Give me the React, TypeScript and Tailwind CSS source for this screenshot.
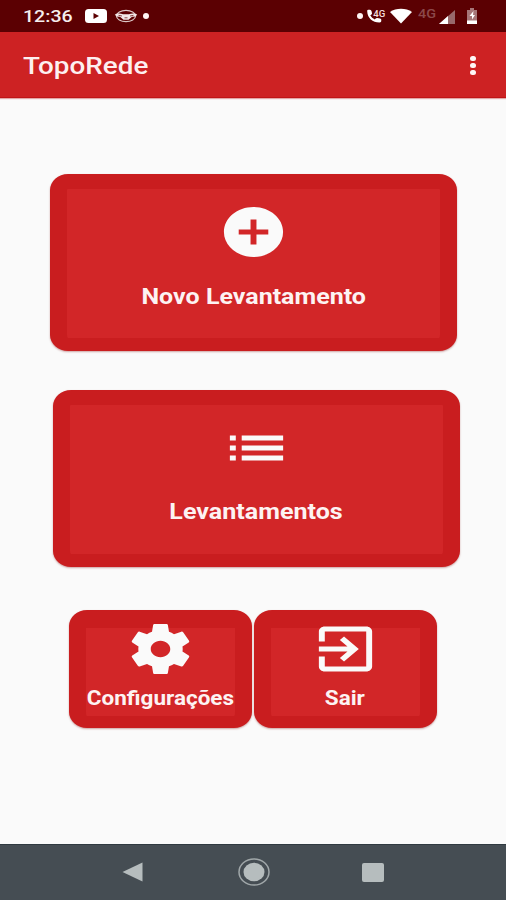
import type { ReactNode } from "react";

function Glyph({ d, className = "" }: { d: string; className?: string }) {
  return (
    <svg viewBox="0 0 24 24" preserveAspectRatio="none" className={`h-[60px] w-[71px] shrink-0 fill-[#fafafa] ${className}`}>
      <path d={d} />
    </svg>
  );
}

const ADD = "M12 2C6.48 2 2 6.48 2 12s4.48 10 10 10 10-4.48 10-10S17.52 2 12 2zm5 11h-4v4h-2v-4H7v-2h4V7h2v4h4v2z";
const LIST = "M3 13h2v-2H3v2zm0 4h2v-2H3v2zm0-8h2V7H3v2zm4 4h14v-2H7v2zm0 4h14v-2H7v2zM7 7v2h14V7H7z";
const GEAR = "M19.43 12.98c.04-.32.07-.64.07-.98s-.03-.66-.07-.98l2.11-1.65c.19-.15.24-.42.12-.64l-2-3.46c-.12-.22-.39-.3-.61-.22l-2.49 1c-.52-.4-1.08-.73-1.69-.98l-.38-2.65C14.46 2.18 14.25 2 14 2h-4c-.25 0-.46.18-.49.42l-.38 2.65c-.61.25-1.17.59-1.69.98l-2.49-1c-.23-.09-.49 0-.61.22l-2 3.46c-.13.22-.07.49.12.64l2.11 1.65c-.04.32-.07.65-.07.98s.03.66.07.98l-2.11 1.65c-.19.15-.24.42-.12.64l2 3.46c.12.22.39.3.61.22l2.49-1c.52.4 1.08.73 1.69.98l.38 2.65c.03.24.24.42.49.42h4c.25 0 .46-.18.49-.42l.38-2.65c.61-.25 1.17-.59 1.69-.98l2.49 1c.23.09.49 0 .61-.22l2-3.46c.12-.22.07-.49-.12-.64l-2.11-1.65zM12 15.3c-1.82 0-3.3-1.48-3.3-3.3s1.48-3.3 3.3-3.3 3.3 1.48 3.3 3.3-1.48 3.3-3.3 3.3z";
const EXIT = "M10.09 15.59L11.5 17l5-5-5-5-1.41 1.41L12.67 11H3v2h9.67l-2.58 2.59zM19 3H5c-1.11 0-2 .9-2 2v4h2V5h14v14H5v-4H3v4c0 1.1.89 2 2 2h14c1.1 0 2-.9 2-2V5c0-1.1-.9-2-2-2z";

function Card({ className, children }: { className: string; children: ReactNode }) {
  return (
    <button className={`flex shrink-0 rounded-[18px/16px] border-[#c91d1f] bg-[#d22628] shadow-[0_1px_2px_rgba(120,0,0,0.35)] ${className}`}>
      <span className="flex h-full w-full flex-col items-center">{children}</span>
    </button>
  );
}

function StatusBar() {
  return (
    <div className="flex h-8 shrink-0 items-center bg-[#5b0002] pl-[23px]">
      <span className="w-[62px] shrink-0 whitespace-nowrap text-[17px] font-medium leading-8 text-[#f6eeee]">
        <span className="inline-block origin-left scale-x-[1.15]">12:36</span>
      </span>
      <svg viewBox="0 0 22 14" className="h-[14px] w-[22px] shrink-0">
        <rect width="22" height="14" rx="3.5" fill="#fff" />
        <path d="M8.5 4v6l5.5-3z" fill="#5b0002" />
      </svg>
      <svg viewBox="0 0 24 16" className="ml-[7px] h-4 w-6 shrink-0">
        <ellipse cx="12" cy="8" rx="9.5" ry="5.7" fill="none" stroke="#dcc6c6" strokeWidth="1.200" />
        <path d="M.8 6.500C3 5.400 6 5 9 6.200h6c3-1.200 6-.8 8.200.3-1 2-3.500 2.300-5.200 2.300l-3.500 3h-5L6 8.800C4.300 8.800 1.800 8.500.8 6.500z" fill="#f3e8e8" />
        <path d="M4.500 7.300l3.500.7M19.500 7.300L16 8M10.500 9.800h3" stroke="#5b0002" strokeWidth=".7" />
      </svg>
      <span className="ml-[5px] size-[6px] rounded-full bg-[#fff4f4]" />
      <span className="ml-[208px] size-[6px] rounded-full bg-[#fff4f4]" />
      <svg viewBox="0 0 20 18" className="ml-[3px] h-[18px] w-5 shrink-0">
        <path d="M1.200 4.200C1 3 1.800 2.700 3 2.700c1.300 0 2.200.2 2.500 1.300l.5 2.200c.1.700-.2 1.100-.8 1.500l-.9.600c1 2 2.300 3.200 4.500 4.100l.9-.9c.5-.5 1-.7 1.700-.5l2.600.5c1 .2 1.300.8 1.300 1.800 0 1.500-.4 2.200-1.800 2.200C6.500 15.500 1.500 11 1.200 4.200z" fill="#fff" />
        <text x="7.200" y="9.500" fontSize="9" fontWeight="500" fill="#f5dcdc" textLength="12" lengthAdjust="spacingAndGlyphs">4G</text>
      </svg>
      <svg viewBox="0 0 22 16" className="ml-[4px] h-4 w-[22px] shrink-0">
        <path d="M0 4C6-.3 16-.3 22 4L11 15.500z" fill="#fff" />
      </svg>
      <span className="ml-[6px] h-8 w-[21px] shrink-0 text-[12px] font-medium leading-[28px] text-[#8b484a]">
        <span className="inline-block origin-left scale-x-[1.2]">4G</span>
      </span>
      <svg viewBox="0 0 16 15" className="h-[15px] w-4 shrink-0">
        <path d="M0 15L16 1v14z" fill="#98696b" />
        <path d="M0 15l9-8v8z" fill="#fff" />
      </svg>
      <svg viewBox="0 0 12 16" className="ml-[11px] h-4 w-3 shrink-0">
        <path d="M1 2h3V0h4v2h3v14H1z" fill="#a67678" />
        <path d="M1 12.500h10V16H1z" fill="#fff" />
        <path d="M7.500 3L3.500 8H6v3.500L9 7H7z" fill="#fff" />
      </svg>
    </div>
  );
}

function Label({ children, className }: { children: ReactNode; className: string }) {
  return <span className={`inline-block whitespace-nowrap font-bold text-[#fdf3f3] ${className}`}>{children}</span>;
}

export default function App() {
  return (
    <div className="flex h-[900px] w-[506px] flex-col overflow-hidden bg-[#fafafa] font-[Roboto,sans-serif]">
      <StatusBar />
      <header className="flex h-[66px] shrink-0 items-center justify-between border-b border-[#c01416] bg-[#cd2223] pl-[23px] pr-[30px] shadow-[0_1px_1px_rgba(190,40,40,0.4)]">
        <h1 className="mt-[3px] origin-left scale-x-[1.16] text-[24px] font-medium leading-none text-[#fdf0f0]">TopoRede</h1>
        <div className="mt-px flex flex-col gap-[2px]">
          <i className="h-[5px] w-[6px] rounded-full bg-[#fff6f6]" />
          <i className="h-[5px] w-[6px] rounded-full bg-[#fff6f6]" />
          <i className="h-[5px] w-[6px] rounded-full bg-[#fff6f6]" />
        </div>
      </header>
      <main className="flex grow flex-col">
        <Card className="ml-[50px] mt-[76px] h-[177px] w-[407px] border-x-[17.500px] border-b-[13px] border-t-[15px] pt-[13px]">
          <Glyph d={ADD} />
          <Label className="mt-[22px] scale-x-[1.137] text-[22px] leading-[26px]">Novo Levantamento</Label>
        </Card>
        <Card className="ml-[53px] mt-[39px] h-[177px] w-[407px] border-x-[17.500px] border-b-[13px] border-t-[15px] pt-[13px]">
          <Glyph d={LIST} />
          <Label className="mt-[21px] scale-x-[1.14] text-[22px] leading-[26px]">Levantamentos</Label>
        </Card>
        <div className="ml-[69px] mt-[43px] flex gap-[2px]">
          <Card className="h-[118px] w-[183px] border-x-[17px] border-b-[12px] border-t-[18px]">
            <Glyph d={GEAR} className="-mt-[9px]" />
            <Label className="mt-[6px] scale-x-[1.125] text-[20px] leading-[26px]">Configurações</Label>
          </Card>
          <Card className="h-[118px] w-[183px] border-x-[17px] border-b-[12px] border-t-[18px]">
            <Glyph d={EXIT} className="-mt-[9px]" />
            <Label className="mt-[6px] -ml-[2px] scale-x-[1.125] text-[20px] leading-[26px]">Sair</Label>
          </Card>
        </div>
      </main>
      <nav className="flex h-[56px] shrink-0 items-center border-t border-[#303a41] bg-[#454d53] pl-[122px]">
        <svg viewBox="0 0 22 20" className="-mt-px h-5 w-[22px]"><path d="M.5 10L20.500.500v19z" fill="#b6bdbe" /></svg>
        <svg viewBox="0 0 32 28" className="-mt-px ml-[94px] h-7 w-8">
          <ellipse cx="16" cy="14" rx="15" ry="13" fill="none" stroke="#a0a7a9" strokeWidth="1.500" />
          <ellipse cx="16" cy="14" rx="10.500" ry="9.300" fill="#b6bdbe" />
        </svg>
        <span className="-mt-px ml-[92px] h-[19px] w-[22px] rounded-[2px] bg-[#b6bdbe]" />
      </nav>
    </div>
  );
}
